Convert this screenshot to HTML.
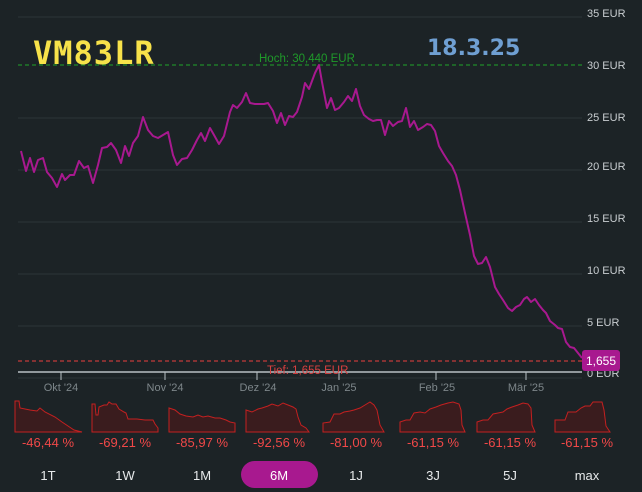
<!DOCTYPE html>
<html><head><meta charset="utf-8"><style>
body{margin:0;width:642px;height:492px;background:#1c2326;overflow:hidden;font-family:"Liberation Sans",sans-serif;}
svg{position:absolute;left:0;top:0}
</style></head><body>
<svg width="642" height="492" viewBox="0 0 642 492">
<g stroke="#2b3538" stroke-width="1">
<line x1="18" y1="17" x2="582" y2="17"/><line x1="18" y1="118" x2="582" y2="118"/>
<line x1="18" y1="170" x2="582" y2="170"/><line x1="18" y1="222" x2="582" y2="222"/>
<line x1="18" y1="274" x2="582" y2="274"/><line x1="18" y1="326" x2="582" y2="326"/>
<line x1="18" y1="378" x2="582" y2="378"/>
</g>
<g font-size="11" fill="#c8cdd0">
<text x="587" y="17">35 EUR</text><text x="587" y="69">30 EUR</text><text x="587" y="121">25 EUR</text>
<text x="587" y="170">20 EUR</text><text x="587" y="222">15 EUR</text><text x="587" y="274">10 EUR</text>
<text x="587" y="326">5 EUR</text><text x="587" y="377">0 EUR</text>
</g>
<line x1="18" y1="65" x2="582" y2="65" stroke="#1f8a2a" stroke-dasharray="4,3" stroke-width="1.2"/>
<text x="259" y="62" font-size="11.5" fill="#1f9a2a">Hoch: 30,440 EUR</text>
<line x1="18" y1="361" x2="582" y2="361" stroke="#c23a3a" stroke-dasharray="4,3" stroke-width="1.2"/>
<line x1="18" y1="372" x2="582" y2="372" stroke="#b8c0c4" stroke-width="1.5"/>
<text x="267" y="374" font-size="11.5" fill="#d94040">Tief: 1,655 EUR</text>
<g stroke="#b8c0c4"><line x1="61" y1="372" x2="61" y2="380"/><line x1="165" y1="372" x2="165" y2="380"/><line x1="257" y1="372" x2="257" y2="380"/><line x1="339" y1="372" x2="339" y2="380"/><line x1="436" y1="372" x2="436" y2="380"/><line x1="526" y1="372" x2="526" y2="380"/></g>
<g font-size="11" fill="#7d868a" text-anchor="middle">
<text x="61" y="391">Okt '24</text><text x="165" y="391">Nov '24</text><text x="258" y="391">Dez '24</text><text x="339" y="391">Jan '25</text><text x="437" y="391">Feb '25</text><text x="526" y="391">Mär '25</text>
</g>
<polyline fill="none" stroke="#a8198f" stroke-width="2" stroke-linejoin="round" points="21,151 26,171 30,158 34,172 38,160 43,158 47,172 52,178 57,187 62,174 65,180 70,175 74,175 79,161 84,168 88,166 93,183 98,165 102,148 107,147 111,143 116,150 121,163 125,146 129,156 133,143 138,136 143,117 148,130 153,136 158,138 163,135 168,132 173,155 177,165 182,159 187,158 192,150 197,140 201,133 205,141 210,128 214,135 219,144 224,136 230,112 233,105 237,108 242,102 246,93 250,103 255,104 260,104 264,104 268,103 273,111 277,123 281,113 285,125 289,116 293,117 297,112 302,97 305,83 309,89 315,73 319,65 322,82 327,108 331,98 335,110 339,108 344,102 348,96 352,101 356,89 360,106 364,115 369,119 373,121 377,120 381,120 385,135 389,121 393,126 398,122 402,121 406,108 410,127 414,121 418,130 423,127 427,124 431,125 435,131 439,146 443,153 448,161 452,166 456,175 460,190 465,213 470,235 474,256 478,264 482,263 486,257 490,267 495,287 499,294 503,300 508,308 512,311 516,307 520,305 524,299 527,297 531,302 535,299 539,305 543,310 546,313 550,321 555,325 558,328 562,329 566,342 570,347 574,348 578,353 582,358"/>
<rect x="582" y="350" width="38" height="21" rx="3" fill="#a8198f"/>
<text x="601" y="365" font-size="12" fill="#fff" text-anchor="middle">1,655</text>
<text x="33" y="64" font-size="32" font-weight="bold" fill="#f7e24a" font-family="DejaVu Sans Mono, monospace" letter-spacing="1">VM83LR</text>
<text x="427" y="55" font-size="22" font-weight="bold" fill="#6f9fd2" font-family="DejaVu Sans, sans-serif">18.3.25</text>
<g stroke="#c42020" stroke-width="1" fill="#3a1c1e">
<polygon points="15,432 15,401 19,401 20,408 30,410 37,411 40,408 45,412 55,417 62,422 68,426 74,430 82,432"/>
<polygon points="92,432 92,404 95,404 96,415 98,415 99,407 104,405 107,405 109,402 112,404 116,404 119,409 124,412 126,413 128,419 137,419 145,420 153,420 155,424 158,428 158,432"/>
<polygon points="169,432 169,408 175,410 180,414 186,416 193,417 198,415 203,417 208,416 215,418 220,418 226,420 230,422 235,423 235,432"/>
<polygon points="246,432 246,410 252,412 258,409 262,408 268,406 272,404 278,406 283,403 288,405 293,407 296,409 298,417 301,425 306,428 309,432"/>
<polygon points="323,432 323,423 330,422 334,414 340,414 344,412 350,411 354,410 360,408 365,405 370,402 374,405 377,410 380,425 384,432"/>
<polygon points="400,432 400,422 406,420 410,420 414,413 420,412 425,413 430,409 436,407 441,405 448,403 453,402 459,404 461,410 462,425 465,432"/>
<polygon points="477,432 477,422 483,420 488,420 493,414 498,413 503,412 507,409 512,407 518,405 523,403 528,404 531,408 532,425 535,432"/>
<polygon points="555,432 555,420 565,420 568,412 576,412 581,408 585,406 590,406 593,402 602,402 604,410 606,426 610,432"/>
</g>
<g font-size="13" fill="#f04848" text-anchor="middle">
<text x="48" y="447">-46,44 %</text><text x="125" y="447">-69,21 %</text><text x="202" y="447">-85,97 %</text><text x="279" y="447">-92,56 %</text>
<text x="356" y="447">-81,00 %</text><text x="433" y="447">-61,15 %</text><text x="510" y="447">-61,15 %</text><text x="587" y="447">-61,15 %</text>
</g>
<rect x="241" y="461" width="77" height="27" rx="13.5" fill="#a8198f"/>
<g font-size="13" fill="#e6e9ea" text-anchor="middle">
<text x="48" y="480">1T</text><text x="125" y="480">1W</text><text x="202" y="480">1M</text><text x="279" y="480" fill="#fff">6M</text>
<text x="356" y="480">1J</text><text x="433" y="480">3J</text><text x="510" y="480">5J</text><text x="587" y="480">max</text>
</g>
</svg>
</body></html>
